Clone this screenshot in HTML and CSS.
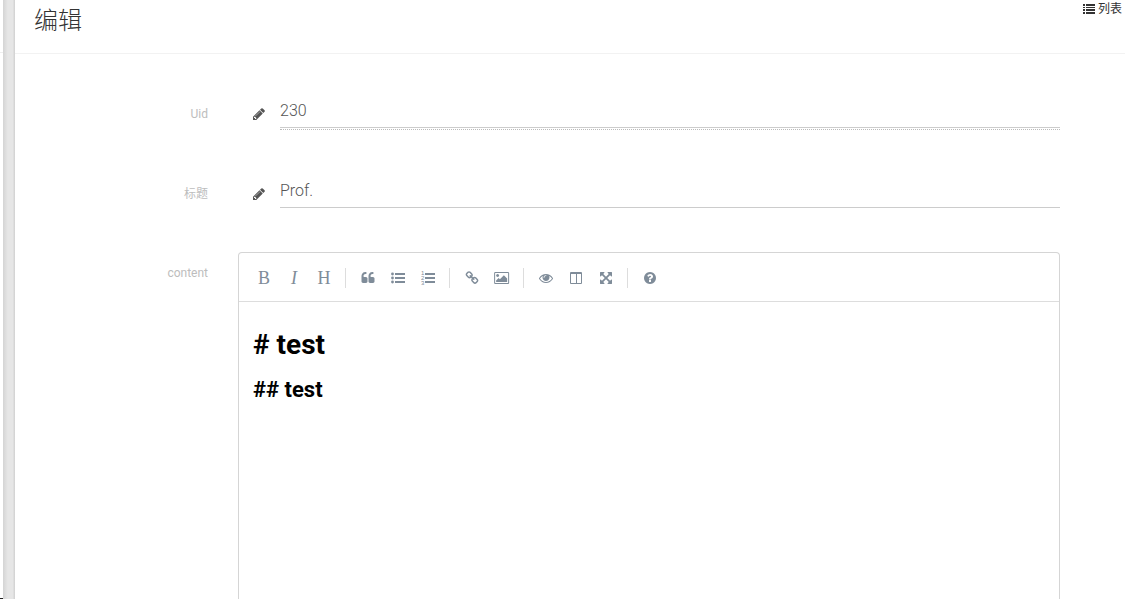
FILE: index.html
```html
<!DOCTYPE html>
<html lang="zh-CN">
<head>
    <meta charset="UTF-8">
    <meta name="viewport" content="width=device-width, initial-scale=1.0">
    <title>编辑</title>
    <link rel="stylesheet" href="styles.css">
</head>
<body>
    <div class="page">
        <div class="side">
            <div class="side-head"></div>
            <div class="side-foot"></div>
        </div>
        <div class="divider"></div>

        <main class="card">
            <header class="card-header">
                <h1>编辑</h1>
                <a href="#" class="list-link">
                    <svg width="12" height="10" viewBox="0 0 12 10"><path d="M0 0h2v2H0zM3 0h9v2H3zM0 3h2v1H0zM3 3h9v1H3zM0 5h2v2H0zM3 5h9v2H3zM0 8h2v2H0zM3 8h9v2H3z"/></svg>
                    列表
                </a>
            </header>

            <form class="form">
                <div class="row">
                    <label for="uid">Uid</label>
                    <div class="field focused">
                        <svg class="icon pencil" viewBox="0 0 1792 1792"><path d="M491 1536l91-91-235-235-91 91v107h128v128h107zm523-928q0-22-22-22-10 0-17 7l-542 542q-7 7-7 17 0 22 22 22 10 0 17-7l542-542q7-7 7-17zm-54-192l416 416-832 832h-416v-416zm683 96q0 53-37 90l-166 166-416-416 166-165q36-38 90-38 53 0 91 38l235 234q37 39 37 91z"/></svg>
                        <div class="input-wrap"><input type="text" id="uid" value="230"></div>
                    </div>
                </div>

                <div class="row">
                    <label for="title">标题</label>
                    <div class="field">
                        <svg class="icon pencil" viewBox="0 0 1792 1792"><path d="M491 1536l91-91-235-235-91 91v107h128v128h107zm523-928q0-22-22-22-10 0-17 7l-542 542q-7 7-7 17 0 22 22 22 10 0 17-7l542-542q7-7 7-17zm-54-192l416 416-832 832h-416v-416zm683 96q0 53-37 90l-166 166-416-416 166-165q36-38 90-38 53 0 91 38l235 234q37 39 37 91z"/></svg>
                        <div class="input-wrap"><input type="text" id="title" value="Prof."></div>
                    </div>
                </div>

                <div class="row row-editor">
                    <span class="label" id="content-label">content</span>
                    <div class="editor">
                        <div class="toolbar">
                            <button type="button" class="letter" aria-label="Bold">B</button>
                            <button type="button" class="letter italic" aria-label="Italic">I</button>
                            <button type="button" class="letter" aria-label="Heading">H</button>
                            <i class="separator"></i>
                            <button type="button" aria-label="Quote">
                                <svg class="icon" viewBox="0 0 1792 1792"><path d="M832 960v384q0 80-56 136t-136 56h-384q-80 0-136-56t-56-136v-704q0-104 40-198t110-164 163-109 199-41h64q26 0 45 19t19 45v128q0 26-19 45t-45 19h-64q-106 0-181 75t-75 181v32q0 40 28 68t68 28h224q80 0 136 56t56 136zm896 0v384q0 80-56 136t-136 56h-384q-80 0-136-56t-56-136v-704q0-104 40-198t110-164 163-109 199-41h64q26 0 45 19t19 45v128q0 26-19 45t-45 19h-64q-106 0-181 75t-75 181v32q0 40 28 68t68 28h224q80 0 136 56t56 136z"/></svg>
                            </button>
                            <button type="button" aria-label="Generic List">
                                <svg class="icon" viewBox="0 0 14 14"><circle cx="1.5" cy="3" r="1.4"/><circle cx="1.5" cy="7" r="1.4"/><circle cx="1.5" cy="11" r="1.4"/><path d="M4 2h10v2H4zM4 6h10v2H4zM4 10h10v2H4z"/></svg>
                            </button>
                            <button type="button" aria-label="Numbered List">
                                <svg class="icon" viewBox="0 0 14 14"><path d="M4 2h10v2H4zM4 6h10v2H4zM4 10h10v2H4z"/><text x="0" y="4">1</text><text x="0" y="9">2</text><text x="0" y="14">3</text></svg>
                            </button>
                            <i class="separator"></i>
                            <button type="button" aria-label="Create Link">
                                <svg class="icon" viewBox="0 0 1792 1792"><path d="M1520 1216q0-40-28-68l-208-208q-28-28-68-28-42 0-72 32 3 3 19 18.500t21.500 21.500 15 19 13 25.500 3.500 27.500q0 40-28 68t-68 28q-15 0-27.500-3.500t-25.500-13-19-15-21.500-21.500-18.500-19q-33 31-33 73 0 40 28 68l206 207q27 27 68 27 40 0 68-26l147-146q28-28 28-67zm-703-705q0-40-28-68l-206-207q-28-28-68-28-39 0-68 27l-147 146q-28 28-28 67 0 40 28 68l208 208q27 27 68 27 42 0 72-31-3-3-19-18.500t-21.500-21.500-15-19-13-25.500-3.500-27.500q0-40 28-68t68-28q15 0 27.500 3.500t25.500 13 19 15 21.500 21.500 18.500 19q33-31 33-73zm895 705q0 120-85 203l-147 146q-83 83-203 83-121 0-204-85l-206-207q-83-83-83-203 0-123 88-209l-88-88q-86 88-208 88-120 0-204-84l-208-208q-84-84-84-204t85-203l147-146q83-83 203-83 121 0 204 85l206 207q83 83 83 203 0 123-88 209l88 88q86-88 208-88 120 0 204 84l208 208q84 84 84 204z"/></svg>
                            </button>
                            <button type="button" aria-label="Insert Image">
                                <svg class="icon wide" viewBox="-16 0 1920 1792"><path d="M576 576q0 80-56 136t-136 56-136-56-56-136 56-136 136-56 136 56 56 136zm1024 384v448h-1408v-192l320-320 160 160 512-512zm96-704h-1600q-13 0-22.500 9.500t-9.500 22.500v1216q0 13 9.500 22.500t22.500 9.500h1600q13 0 22.500-9.500t9.500-22.500v-1216q0-13-9.500-22.500t-22.500-9.500zm160 32v1216q0 66-47 113t-113 47h-1600q-66 0-113-47t-47-113v-1216q0-66 47-113t113-47h1600q66 0 113 47t47 113z"/></svg>
                            </button>
                            <i class="separator"></i>
                            <button type="button" aria-label="Toggle Preview">
                                <svg class="icon" viewBox="0 0 1792 1792"><path d="M1664 960q-152-236-381-353 61 104 61 225 0 185-131.500 316.500t-316.500 131.500-316.500-131.500-131.500-316.500q0-121 61-225-229 117-381 353 133 205 333.500 326.500t434.500 121.500 434.500-121.500 333.500-326.500zm-720-384q0-20-14-34t-34-14q-125 0-214.500 89.500t-89.500 214.500q0 20 14 34t34 14 34-14 14-34q0-86 61-147t147-61q20 0 34-14t14-34zm848 384q0 34-20 69-140 230-376.500 368.500t-499.500 138.500-499.500-139-376.500-368q-20-35-20-69t20-69q140-229 376.500-368t499.500-139 499.500 139 376.500 368q20 35 20 69z"/></svg>
                            </button>
                            <button type="button" aria-label="Toggle Side by Side">
                                <svg class="icon" viewBox="0 0 14 14"><path fill-rule="evenodd" d="M2 1h10q1 0 1 1v10q0 1-1 1H2q-1 0-1-1V2q0-1 1-1zM2 3v9h5V3zM8 3v9h4V3z"/></svg>
                            </button>
                            <button type="button" aria-label="Toggle Fullscreen">
                                <svg class="icon" viewBox="0 0 1792 1792"><path d="M1411 541l-355 355 355 355 144-144q29-31 70-14 39 17 39 59v448q0 26-19 45t-45 19h-448q-42 0-59-40-17-39 14-69l144-144-355-355-355 355 144 144q31 30 14 69-17 40-59 40h-448q-26 0-45-19t-19-45v-448q0-42 40-59 39-17 69 14l144 144 355-355-355-355-144 144q-19 19-45 19-12 0-24-5-40-17-40-59v-448q0-26 19-45t45-19h448q42 0 59 40 17 39-14 69l-144 144 355 355 355-355-144-144q-31-30-14-69 17-40 59-40h448q26 0 45 19t19 45v448q0 42-39 59-13 5-25 5-26 0-45-19z"/></svg>
                            </button>
                            <i class="separator"></i>
                            <button type="button" aria-label="Markdown Guide">
                                <svg class="icon" viewBox="0 0 1792 1792"><path d="M1024 1376v-192q0-14-9-23t-23-9h-192q-14 0-23 9t-9 23v192q0 14 9 23t23 9h192q14 0 23-9t9-23zm256-672q0-88-55.500-163t-138.500-116-170-41q-243 0-371 213-15 24 8 42l132 100q7 6 19 6 16 0 25-12 53-68 86-92 34-24 86-24 48 0 85.500 26t37.500 59q0 38-20 61t-68 45q-63 28-115.500 86.500t-52.500 125.500v36q0 14 9 23t23 9h192q14 0 23-9t9-23q0-19 21.500-49.500t54.500-49.500q32-18 49-28.500t46-35 44.500-48 28-60.500 12.500-81zm384 192q0 209-103 385.500t-279.500 279.500-385.500 103-385.500-103-279.500-279.500-103-385.500 103-385.500 279.500-279.500 385.500-103 385.500 103 279.500 279.500 103 385.500z"/></svg>
                            </button>
                        </div>
                        <div class="editor-text" contenteditable="true" role="textbox" aria-multiline="true" aria-labelledby="content-label" spellcheck="false">
                            <div class="line-h1"># test</div>
                            <div class="line-h2">## test</div>
                        </div>
                    </div>
                </div>
            </form>
        </main>
    </div>
</body>
</html>
```
FILE: styles.css
```css
* {
    box-sizing: border-box;
}

body {
    margin: 0;
    background: #fff;
    color: #333;
    font-family: Roboto, "Noto Sans CJK SC", sans-serif;
    font-size: 12px;
}

.page {
    display: flex;
    height: 100vh;
    overflow: hidden;
}

/* Edge of the side menu */
.side {
    display: flex;
    flex-direction: column;
    justify-content: space-between;
    width: 3px;
}

.side-head {
    height: 53px;
    border-bottom: 1px solid #eee;
}

.side-foot {
    height: 1px;
    background: #222;
}

.divider {
    width: 12px;
    background: linear-gradient(to right, #d4d4d4, #e6e6e6 40%, #e6e6e6 80%, #d0d0d0);
}

.card {
    flex: 1;
    display: flex;
    flex-direction: column;
    min-width: 0;
}

.card-header {
    display: flex;
    justify-content: space-between;
    align-items: flex-start;
    height: 54px;
    padding: 0 3px 0 19px;
    border-bottom: 1px solid #f2f2f2;
}

.card-header h1 {
    margin: 0;
    font-size: 24px;
    font-weight: 300;
    line-height: 42px;
}

.list-link {
    display: flex;
    align-items: center;
    gap: 3px;
    color: #333;
    line-height: 18px;
    text-decoration: none;
}

svg {
    fill: currentColor;
}

/* Form */
.form {
    flex: 1;
    display: flex;
    flex-direction: column;
    gap: 44px;
    padding: 40px 65px 0 0;
}

.row {
    display: grid;
    grid-template-columns: 193px 1fr;
    column-gap: 30px;
}

.row label,
.row .label {
    color: #bdbdbd;
    line-height: 40px;
    height: 34px;
    text-align: right;
}

.row-editor {
    flex: 1;
}

.row-editor .label {
    line-height: 42px;
}

.field {
    display: flex;
}

.icon {
    width: 14px;
    height: 14px;
}

.pencil {
    margin: 13px 14px 0;
    color: #555;
}

.input-wrap {
    flex: 1;
}

.focused .input-wrap {
    padding-bottom: 1px;
    border-bottom: 1px dotted #bbb;
}

.field input {
    display: block;
    width: 100%;
    height: 34px;
    padding: 0;
    border: none;
    border-bottom: 1px solid #ccc;
    outline: none;
    background: none;
    color: #555;
    font-family: inherit;
    font-size: 16px;
    font-weight: 300;
}

/* Markdown editor */
.editor {
    display: flex;
    flex-direction: column;
    border: 1px solid #d5d5d5;
    border-bottom: none;
    border-radius: 4px 4px 0 0;
}

.toolbar {
    display: flex;
    align-items: center;
    padding: 10px 10px 8px;
    border-bottom: 1px solid #ddd;
}

.toolbar button {
    display: flex;
    align-items: center;
    justify-content: center;
    width: 30px;
    height: 30px;
    padding: 0;
    border: none;
    background: none;
    color: #7f8c99;
    cursor: pointer;
}

.toolbar .letter {
    font-family: "Liberation Serif", serif;
    font-size: 18px;
    font-weight: 500;
}

.toolbar .italic {
    font-style: italic;
}

.toolbar .wide {
    width: 16px;
}

.toolbar text {
    font-size: 6px;
}

.separator {
    width: 1px;
    height: 20px;
    margin: 0 7px 0 6px;
    background: #ddd;
}

.editor-text {
    flex: 1;
    padding: 20px 14px;
    outline: none;
    color: #000;
    font-weight: bold;
}

.line-h1 {
    font-size: 28px;
    line-height: 45px;
}

.line-h2 {
    font-size: 22px;
    line-height: 45px;
}
```
